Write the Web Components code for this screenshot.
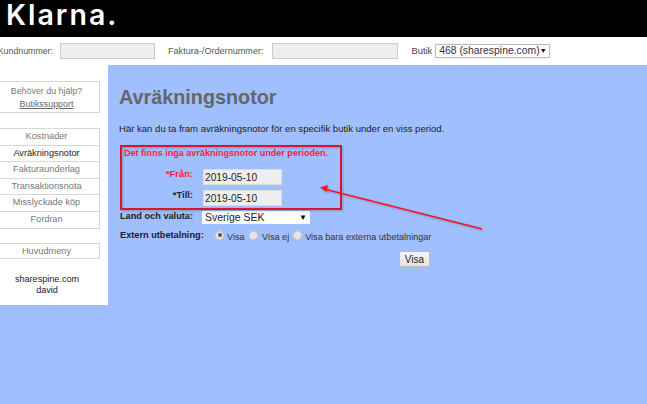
<!DOCTYPE html>
<html lang="sv"><head><meta charset="utf-8"><title>Avräkningsnotor</title>
<style>
html,body{margin:0;padding:0;height:100%;overflow:hidden;background:#9fbfff;font-family:"Liberation Sans",Arial,sans-serif}
body{width:647px;height:404px;display:block;position:relative}
</style></head><body>
<app-page></app-page>
<script>
function def(name,css,html){
  const t=document.createElement('template');
  t.innerHTML='<style>'+css+'</style>'+html;
  customElements.define(name,class extends HTMLElement{
    constructor(){super();this.attachShadow({mode:'open'}).appendChild(t.content.cloneNode(true));}
  });
}
def('brand-bar',`:host{display:flex;align-items:flex-start;height:37px;background:#000;padding-left:6px;box-sizing:border-box}
 span{font:600 28.5px/30px Inter,Lato,"Liberation Sans",sans-serif;color:#fff;letter-spacing:2px}`,
 `<span>Klarna.</span>`);
def('top-bar',`:host{display:flex;align-items:center;height:28px;background:#fff;font-size:9.1px;color:#555;box-sizing:border-box;overflow:hidden;padding-bottom:1px}
 .k{width:53px;display:flex;justify-content:flex-end;white-space:nowrap;margin-right:7px;font-size:8.8px}
 .in{width:95px;height:16px;box-sizing:border-box;background:#eee;border:1px solid #ccc;flex:none}
 .f{margin-left:13px;margin-right:8px;white-space:nowrap}
 .in2{width:126px}
 .b{margin-left:14px;margin-right:3px;color:#445;font-size:9.3px}
 .sel{width:115px;height:14px;box-sizing:border-box;border:1px solid #bbb;border-radius:1px;background:#fff;color:#334;font-size:10.4px;line-height:12px;padding:0 0 0 3px;display:flex;justify-content:space-between;white-space:nowrap;box-shadow:0 0 1px #bbb}
 .sel i{font-style:normal;font-size:7px;color:#000;margin-right:4px}`,
 `<span class="k">Kundnummer:</span><div class="in"></div><span class="f">Faktura-/Ordernummer:</span><div class="in in2"></div><span class="b">Butik</span><div class="sel">468 (sharespine.com)<i>▼</i></div>`);
def('side-box',`:host{display:block;margin-left:-6px;width:106px;box-sizing:border-box;border:1px solid #d8d8d8;border-left:0;background:#fff;color:#777;font-size:9.2px;text-align:center}`,`<slot></slot>`);
def('nav-item',`:host{display:block;height:15.6px;line-height:15px;border-bottom:1px solid #d8d8d8;text-align:center;color:#777;font-size:9.2px}
 :host(:last-child){border-bottom:0}
 :host([active]){color:#222}`,`<slot></slot>`);
def('side-bar',`:host{display:flex;flex-direction:column;width:108px;height:240px;background:#fff;flex:none;padding-top:16px;box-sizing:border-box;align-items:flex-start}
 .help{padding:3px 0;line-height:13px;height:32px;box-sizing:border-box;font-size:8.9px}
 .help u{color:#666}
 .gap{height:15px;flex:none}
 .gap2{height:14px;flex:none}
 .menu{height:16px;line-height:15px}
 .who{width:94px;text-align:center;font-size:9.1px;line-height:11px;color:#222;margin-top:15px}`,
 `<side-box class="help">Behöver du hjälp?<br><u>Butikssupport</u></side-box>
  <div class="gap"></div>
  <side-box><nav-item>Kostnader</nav-item><nav-item active>Avräkningsnotor</nav-item><nav-item>Fakturaunderlag</nav-item><nav-item>Transaktionsnota</nav-item><nav-item>Misslyckade köp</nav-item><nav-item>Fordran</nav-item></side-box>
  <div class="gap2"></div>
  <side-box class="menu">Huvudmeny</side-box>
  <div class="who">sharespine.com<br>david</div>`);
def('date-row',`:host{display:flex;align-items:flex-start;height:17px;font-size:9.4px;font-weight:bold;color:#222}
 .l{width:73px;text-align:right;margin-top:-1px;line-height:12px}
 :host([err]) .l{color:#ff1a3c}
 .v{margin-left:10px;width:79px;height:16px;box-sizing:border-box;border:1px solid #ddd;background:#eee;font:10.2px/16px "Liberation Sans",sans-serif;color:#222;padding-left:1px}`,
 `<span class="l"><slot name="label"></slot></span><div class="v"><slot></slot></div>`);
def('main-panel',`:host{display:block;flex:1;padding:19px 0 0 11px;position:relative;color:#111}
 h1{margin:0;font:bold 19.8px/26px "Liberation Sans",sans-serif;color:#666}
 p{margin:13px 0 0;font-size:9.55px;line-height:12px;color:#222}
 .err{margin:12px 0 0 5px;font-size:9.05px;font-weight:bold;line-height:12px;color:#ff1a3c;white-space:nowrap}
 .rows{display:flex;flex-direction:column;gap:4px;margin-top:10px;margin-left:1px}
 .land{display:flex;align-items:center;margin-top:3px;margin-left:1px;font-size:9.2px;font-weight:bold;color:#222;height:14px}
 .land .n{width:80px;position:relative;top:-1px}
 .drop{width:105px;height:13px;background:#fff;font-weight:normal;font-size:10.5px;line-height:13px;color:#222;padding-left:3px;display:flex;justify-content:space-between;margin-left:2px}
 .drop i{font-style:normal;font-size:8px;margin-right:3px;color:#000}
 .ext{display:flex;align-items:center;margin-top:5px;margin-left:1px;font-size:9.1px;color:#222;height:14px}
 .ext b{width:95px;font-size:9.2px;position:relative;top:-1px;white-space:nowrap}
 .r{width:9px;height:9px;border-radius:50%;background:#e4e4e4;box-shadow:inset 0 0 1px #888;margin-right:3px;position:relative;top:-1px;flex:none;display:inline-block}
 .r.on::after{content:"";position:absolute;left:2.500px;top:2.500px;width:4px;height:4px;border-radius:50%;background:#555}
 .r.b{margin-right:4.500px}
 .o{margin-right:4px;position:relative;top:1px;color:#333;white-space:nowrap}
 .btnrow{margin-top:8px;width:311px;display:flex;justify-content:flex-end}
 button{width:31px;height:16px;border:1px solid #bbb;border-radius:2px;background:linear-gradient(#f6f6f6,#e4e4e4);font:10px "Liberation Sans",sans-serif;color:#222;padding:0}
 svg{position:absolute;left:0;top:0;overflow:visible;pointer-events:none}`,
 `<h1>Avräkningsnotor</h1>
  <p>Här kan du ta fram avräkningsnotor för en specifik butik under en viss period.</p>
  <div class="err">Det finns inga avräkningsnotor under perioden.</div>
  <div class="rows"><date-row err><span slot="label">*Från:</span>2019-05-10</date-row><date-row><span slot="label">*Till:</span>2019-05-10</date-row></div>
  <div class="land"><span class="n">Land och valuta:</span><div class="drop">Sverige SEK<i>▼</i></div></div>
  <div class="ext"><b>Extern utbetalning:</b><span class="r on"></span><span class="o">Visa</span><span class="r b"></span><span class="o">Visa ej</span><span class="r"></span><span class="o">Visa bara externa utbetalningar</span></div>
  <div class="btnrow"><button>Visa</button></div>
  <svg width="539" height="339" viewBox="108 65 539 339">
   <defs><filter id="s" x="-10%" y="-10%" width="120%" height="130%"><feDropShadow dx="1" dy="1" stdDeviation="1" flood-color="#334" flood-opacity=".35"/></filter></defs>
   <g filter="url(#s)">
   <rect x="121" y="146" width="220" height="63" fill="none" stroke="#d9142c" stroke-width="2"/>
   <path d="M482 229 L326 189.500" stroke="#f0141e" stroke-width="1.6" fill="none"/>
   <path d="M320 187.500 L328 185 L326.500 192 Z" fill="#f0141e"/>
   </g>
  </svg>`);
def('app-page',`:host{display:block;width:647px;height:404px;overflow:hidden}
 .row{display:flex;height:339px;align-items:flex-start}`,
 `<brand-bar></brand-bar><top-bar></top-bar><div class="row"><side-bar></side-bar><main-panel></main-panel></div>`);
</script></body></html>
